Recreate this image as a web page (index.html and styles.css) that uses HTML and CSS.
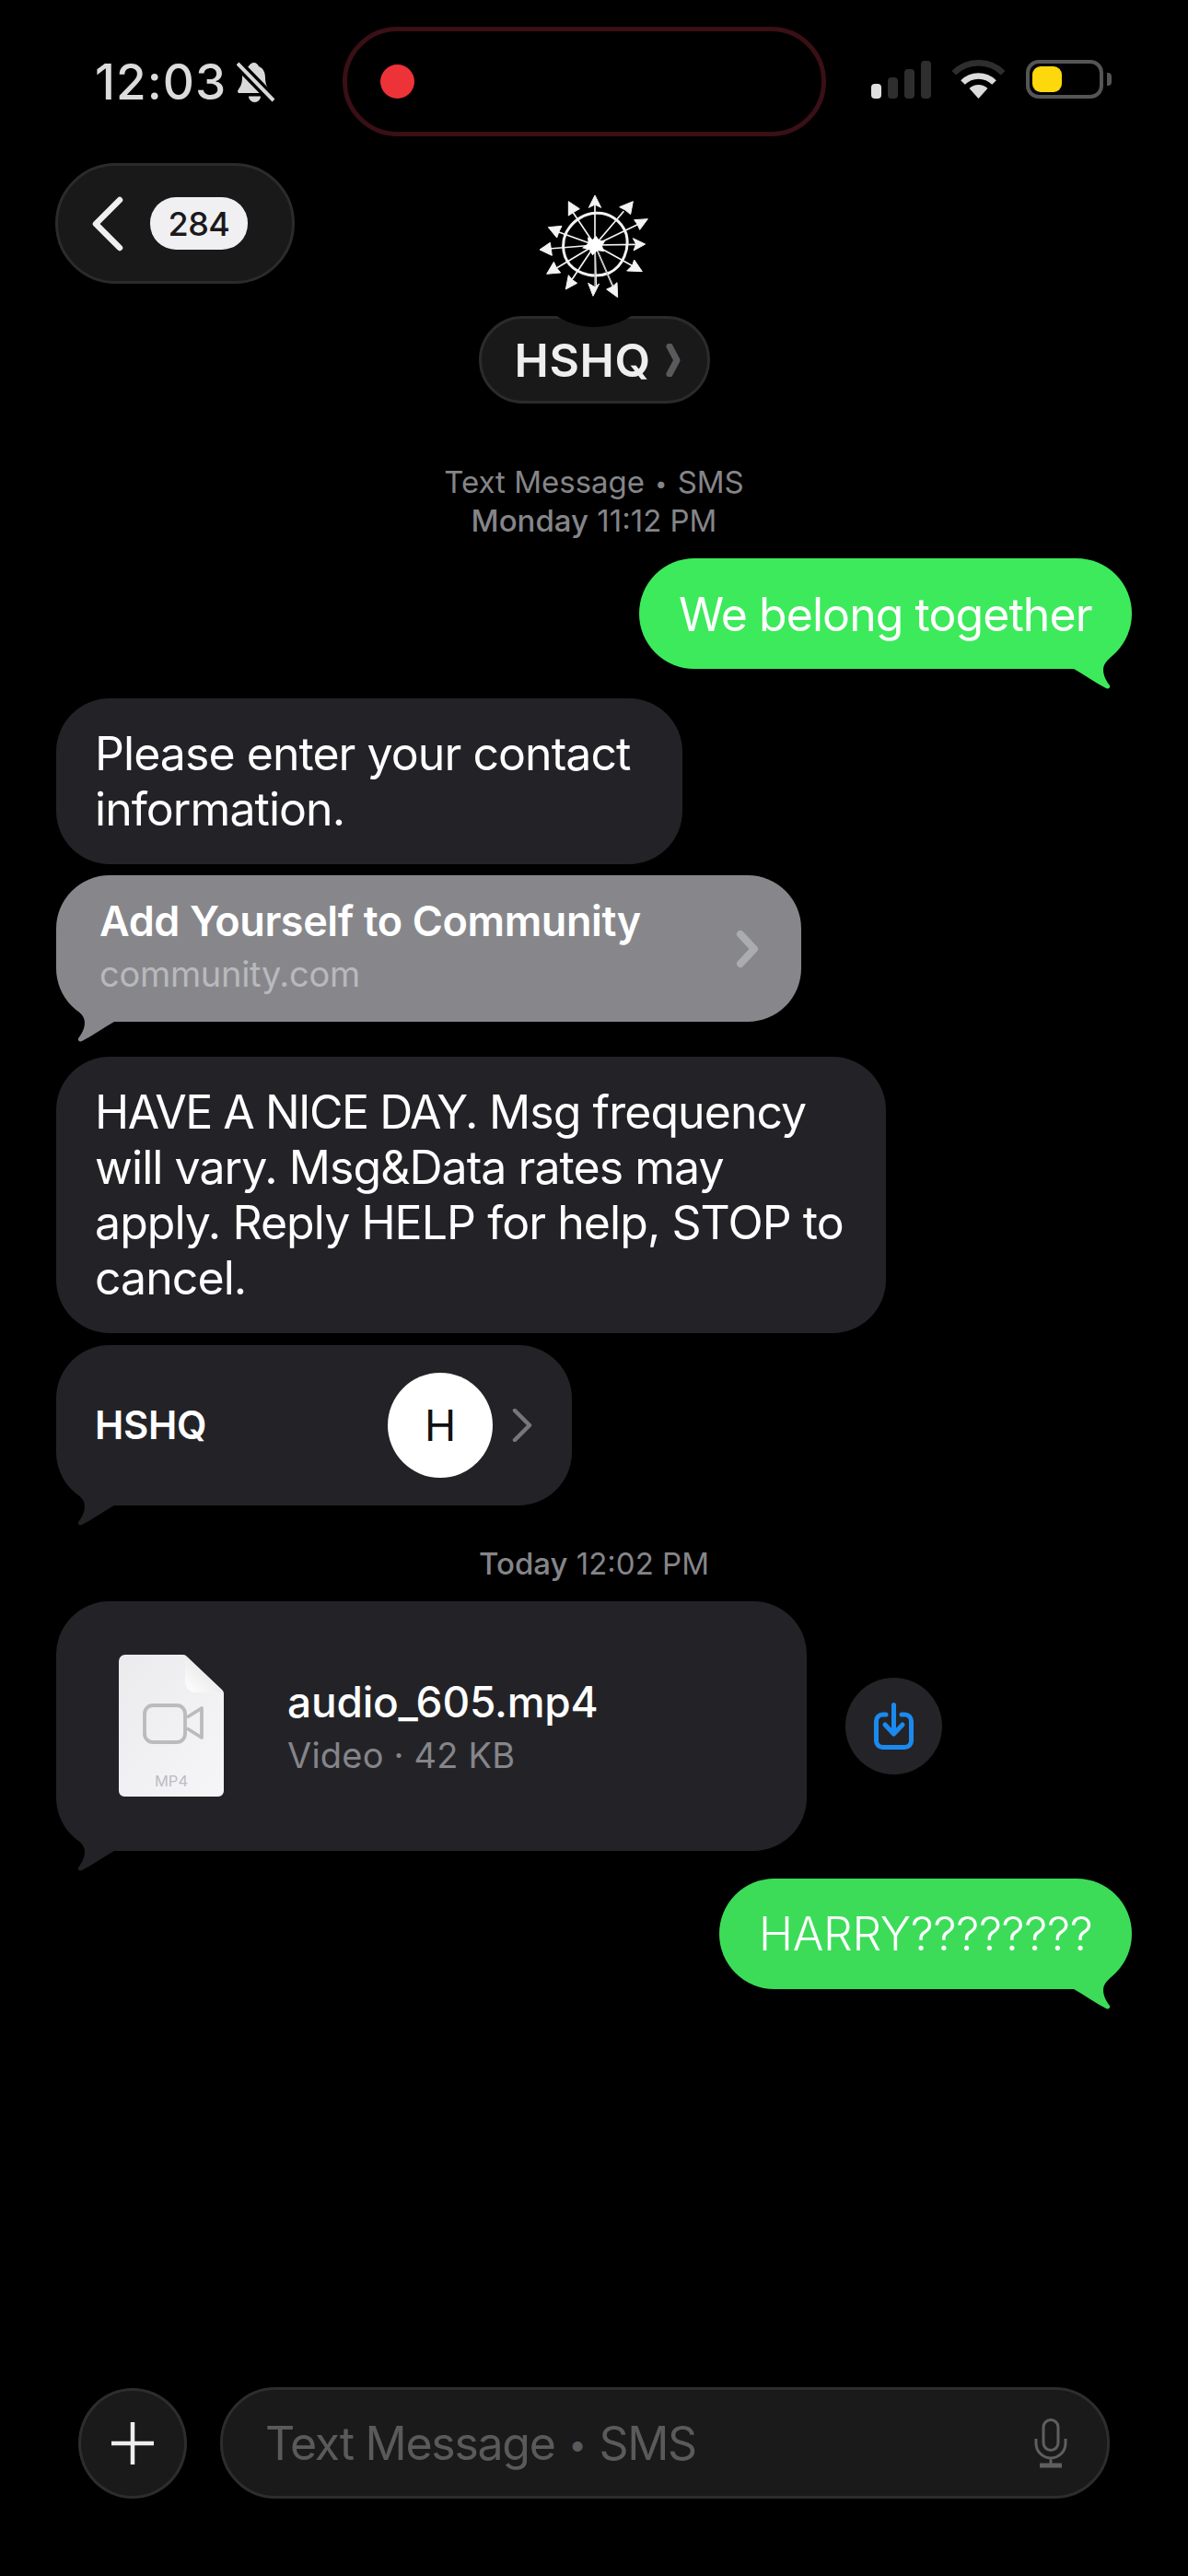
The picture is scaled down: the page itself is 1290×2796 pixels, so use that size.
FILE: index.html
```html
<!DOCTYPE html>
<html lang="en">
<head>
<meta charset="utf-8">
<title>HSHQ</title>
<link rel="stylesheet" href="styles.css">
</head>
<body>
<div class="phone">
  <header class="status">
    <span class="time">12:03</span>
    <svg class="bell" viewBox="0 0 43 46">
      <path d="M19 2c-3 0-5 2-6 4-5 2-7 7-7 12 0 7-2 10-4 13-1.500 2-1 4 1 4h31c2 0 2.500-2 1-4-2-3-4-6-4-13 0-5-2-10-7-12-1-2-3-4-5-4z" fill="#d9d9d9"/>
      <path d="M13 38.500h13c0 3.500-3 6.500-6.500 6.500S13 42 13 38.500z" fill="#d9d9d9"/>
      <path d="M0 2L41 44" stroke="#000" stroke-width="11" fill="none"/>
      <path d="M1 3L40 43" stroke="#d9d9d9" stroke-width="4" fill="none"/>
    </svg>
    <div class="island"><span class="rec"></span></div>
    <div class="signal">
      <span class="bar bar1"></span><span class="bar bar2"></span><span class="bar bar3"></span><span class="bar bar4"></span>
    </div>
    <svg class="wifi" viewBox="0 0 57 42">
      <path d="M28.500 42L18.600 31A14 14 0 0 1 38.400 31Z" fill="#dcdcdc"/>
      <path d="M11.500 24.500A24 24 0 0 1 45.500 24.500" stroke="#dcdcdc" stroke-width="6.500" fill="none"/>
      <path d="M1.800 14.200A38 38 0 0 1 55.200 14.200" stroke="#2e2e2e" stroke-width="6.500" fill="none"/>
    </svg>
    <div class="battery"><span class="battery-box"><span class="battery-fill"></span></span><span class="battery-cap"></span></div>
  </header>

  <nav class="nav">
    <div class="back">
      <svg class="back-chev" viewBox="0 0 36 60"><path d="M31 4L5 30l26 26" fill="none" stroke="#efefef" stroke-width="6.500" stroke-linecap="round" stroke-linejoin="round"/></svg>
      <span class="count">284</span>
    </div>
    <div class="contact-head">
      <div class="avatar">
        <svg class="logo" viewBox="0 0 510 450">
          <path d="M258 124C300 120 345 146 360 192C372 240 350 296 306 318C262 336 206 326 176 292C148 258 148 206 174 172C194 144 226 126 258 124Z" fill="none" stroke="#f4f4f4" stroke-width="9"/>
          <path d="M258 228L258 90M258 228L352 118M258 228L400 160M258 228L392 226M258 228L388 300M258 228L320 370M258 228L262 360M258 228L180 345M258 228L128 306M258 228L108 240M258 228L135 184M258 228L184 118" stroke="#f4f4f4" stroke-width="5" fill="none"/>
          <path d="M258 228L258 370M258 228L318 368" stroke="#bdbdbd" stroke-width="4" fill="none"/>
          <path d="M262 198L272 212L292 214L282 230L288 250L266 246L250 262L240 244L216 238L236 222L234 202L250 210Z" fill="#fff"/>
          <path d="M258 66L278 106L258 96L238 106ZM382 86L374 128L357 114L338 104ZM430 143L404 178L396 160L386 146ZM422 225L384 246L392 225L382 206ZM412 314L362 312L380 294L386 276ZM332 398L296 372L316 363L330 350ZM252 394L236 352L258 365L272 354ZM163 372L200 352L184 341L172 326ZM101 322L146 318L133 302L124 283ZM78 243L118 262L115 240L112 220ZM106 170L134 204L141 184L150 166ZM172 86L208 110L190 120L172 132Z" fill="#f4f4f4" stroke="#f4f4f4" stroke-width="3" stroke-linejoin="round"/>
        </svg>
      </div>
      <div class="name-pill"><span class="name">HSHQ</span><svg class="name-chev" viewBox="0 0 16 36"><path d="M4 3l8 15-8 15" fill="none" stroke="#5a5a5c" stroke-width="7" stroke-linecap="round" stroke-linejoin="round"/></svg></div>
    </div>
  </nav>

  <main class="thread">
    <p class="stamp stamp-first">Text Message <span class="dot">•</span> SMS<br><span class="stamp-day">Monday</span> 11:12 PM</p>

    <div class="bubble green sent-1">We belong together
      <svg class="tail tail-right" viewBox="0 0 70 60"><path d="M17 18C22 26 31 30 31 39C31 46 27 52 24 56C23 59 26 60 28 59C40 53 52 44 63 38L63 28Z"/></svg>
    </div>

    <div class="bubble dark b-contact">Please enter your contact<br>information.</div>

    <div class="bubble link">
      <div class="link-text">
        <div class="link-title">Add Yourself to Community</div>
        <div class="link-sub">community.com</div>
      </div>
      <svg class="link-chev" viewBox="0 0 28 42"><path d="M6 5l15 16L6 37" fill="none" stroke="#abacb0" stroke-width="8" stroke-linecap="round" stroke-linejoin="round"/></svg>
      <svg class="tail tail-left" viewBox="0 0 70 60"><path d="M17 18C22 26 31 30 31 39C31 46 27 52 24 56C23 59 26 60 28 59C40 53 52 44 63 38L63 28Z"/></svg>
    </div>

    <div class="bubble dark b-long"><span class="caps">HAVE A NICE DAY.</span> Msg frequency<br>will vary. Msg&amp;Data rates may<br>apply. Reply HELP for help, STOP to<br>cancel.</div>

    <div class="bubble dark card">
      <span class="card-name">HSHQ</span>
      <span class="card-avatar">H</span>
      <svg class="card-chev" viewBox="0 0 22 36"><path d="M3 2l16 16L3 34" fill="none" stroke="#77777b" stroke-width="4.500" stroke-linecap="round" stroke-linejoin="round"/></svg>
      <svg class="tail tail-left" viewBox="0 0 70 60"><path d="M17 18C22 26 31 30 31 39C31 46 27 52 24 56C23 59 26 60 28 59C40 53 52 44 63 38L63 28Z"/></svg>
    </div>

    <p class="stamp stamp-today"><span class="stamp-day">Today</span> 12:02 PM</p>

    <div class="file-row">
      <div class="bubble dark file">
        <svg class="file-icon" viewBox="0 0 114 154">
          <defs>
            <linearGradient id="page" x1="0" y1="0" x2="1" y2="1"><stop offset="0" stop-color="#ebebed"/><stop offset="1" stop-color="#f6f6f8"/></linearGradient>
            <linearGradient id="fold" x1="0" y1="1" x2="1" y2="0"><stop offset="0" stop-color="#ffffff"/><stop offset="1" stop-color="#dcdcde"/></linearGradient>
          </defs>
          <path d="M7 0H70a6 6 0 0 1 4 2L112 38a6 6 0 0 1 2 5V148a6 6 0 0 1-6 6H6a6 6 0 0 1-6-6V7a7 7 0 0 1 7-7z" fill="url(#page)"/>
          <path d="M72 1L113 41H84a12 12 0 0 1-12-12z" fill="url(#fold)"/>
          <rect x="28" y="55" width="44" height="40" rx="9" fill="none" stroke="#bbbbbe" stroke-width="3.800"/>
          <path d="M74 68L90 58V90L74 80" fill="none" stroke="#bbbbbe" stroke-width="3.800" stroke-linejoin="round"/>
          <text class="file-ext" x="57" y="143" text-anchor="middle">MP4</text>
        </svg>
        <div class="file-text">
          <div class="file-name">audio_605.mp4</div>
          <div class="file-sub">Video · 42 KB</div>
        </div>
        <svg class="tail tail-left" viewBox="0 0 70 60"><path d="M17 18C22 26 31 30 31 39C31 46 27 52 24 56C23 59 26 60 28 59C40 53 52 44 63 38L63 28Z"/></svg>
      </div>
      <div class="download">
        <svg class="download-icon" viewBox="0 0 43 51"><path d="M13 13H9.500a7 7 0 0 0-7 7V41.500a7 7 0 0 0 7 7H33.500a7 7 0 0 0 7-7V20a7 7 0 0 0-7-7H30M21.500 2.500V33M12 24l9.500 10L31 24" fill="none" stroke="#1b8af0" stroke-width="5" stroke-linecap="round" stroke-linejoin="round"/></svg>
      </div>
    </div>

    <div class="bubble green green-b sent-2">HARRY????????
      <svg class="tail tail-right" viewBox="0 0 70 60"><path d="M17 18C22 26 31 30 31 39C31 46 27 52 24 56C23 59 26 60 28 59C40 53 52 44 63 38L63 28Z"/></svg>
    </div>
  </main>

  <footer class="composer">
    <div class="plus"><svg class="plus-icon" viewBox="0 0 46 46"><path d="M23 0V46M0 23H46" stroke="#eeeeee" stroke-width="4.500" fill="none"/></svg></div>
    <div class="field">
      <span class="placeholder">Text Message <span class="dot">•</span> SMS</span>
      <svg class="mic" viewBox="0 0 36 54"><rect x="10" y="1.500" width="16" height="33" rx="8" fill="none" stroke="#5f5f60" stroke-width="3"/><path d="M2 22v5a16 16 0 0 0 32 0v-5M18 43v8" fill="none" stroke="#5f5f60" stroke-width="3"/><path d="M6 51H30" stroke="#5f5f60" stroke-width="5"/></svg>
    </div>
  </footer>
</div>
</body>
</html>
```
FILE: styles.css
```css
* { box-sizing: border-box; }
html, body { margin: 0; padding: 0; background: #000; }
.phone {
  width: 1290px;
  height: 2796px;
  background: #000;
  display: flex;
  flex-direction: column;
  overflow: hidden;
  font-family: "Inter", "Liberation Sans", sans-serif;
  color: #fff;
}
svg { display: block; }
.dot { font-size: 0.7em; line-height: 0; vertical-align: 0.1em; margin: 0 2px; }

/* status bar */
.status {
  display: flex;
  align-items: center;
  height: 119px;
  margin-top: 29px;
  padding-left: 103px;
}
.time { width: 140px; font-size: 53px; font-weight: 500; letter-spacing: 1px; color: #dcdcdc; white-space: nowrap; }
.bell { width: 43px; height: 46px; margin-left: 14px; }
.island {
  width: 525px;
  height: 119px;
  margin-left: 72px;
  border: 5px solid #3a0f15;
  border-radius: 60px;
  display: flex;
  align-items: center;
  padding-left: 36px;
}
.rec { width: 37px; height: 37px; border-radius: 50%; background: #ee3338; }
.signal { display: flex; align-items: flex-end; gap: 7px; height: 41px; margin-left: 49px; margin-top: -5px; }
.bar { width: 11px; border-radius: 4px; background: #2e2e2e; }
.bar1 { height: 16px; background: #e0e0e0; }
.bar2 { height: 23px; }
.bar3 { height: 32px; }
.bar4 { height: 41px; }
.wifi { width: 57px; height: 42px; margin-left: 23px; margin-top: -5px; }
.battery { display: flex; align-items: center; gap: 4px; margin-left: 23px; margin-top: -5px; }
.battery-box { width: 84px; height: 42px; border: 4px solid #555; border-radius: 14px; padding: 3px; display: block; }
.battery-fill { display: block; width: 32px; height: 100%; background: #fcd80c; border-radius: 9px; }
.battery-cap { width: 5px; height: 14px; background: #555; border-radius: 0 4px 4px 0; }

/* nav */
.nav {
  display: grid;
  grid-template-columns: 1fr 251px 1fr;
  padding: 0 60px;
  margin-top: 29px;
  align-items: start;
}
.back {
  width: 260px;
  height: 131px;
  background: #19191a;
  border: 3px solid #2b2b2c;
  border-radius: 66px;
  display: flex;
  align-items: center;
  padding-left: 36px;
}
.back-chev { width: 36px; height: 60px; }
.count {
  margin-left: 28px;
  width: 106px;
  height: 57px;
  border-radius: 28px;
  background: #f0f0f2;
  color: #1a1a1c;
  font-size: 36px;
  font-weight: 500;
  letter-spacing: -0.5px;
  display: flex;
  align-items: center;
  justify-content: center;
}
.contact-head { margin-top: 28px; display: flex; flex-direction: column; align-items: center; }
.avatar {
  position: relative;
  z-index: 1;
  width: 150px;
  height: 150px;
  border-radius: 50%;
  background: #000;
}
.logo { position: absolute; left: -10px; top: -15px; width: 170px; height: 150px; }
.name-pill {
  width: 251px;
  height: 95px;
  margin-top: -12px;
  background: #19191a;
  border: 3px solid #2b2b2c;
  border-radius: 48px;
  display: flex;
  align-items: center;
  padding-left: 36px;
}
.name { font-size: 50px; font-weight: 600; color: #eee; letter-spacing: 0.6px; }
.name-chev { width: 16px; height: 36px; margin-left: 16px; }

/* thread */
.thread { display: flex; flex-direction: column; padding: 0 61px; }
.stamp {
  margin: 0;
  text-align: center;
  font-size: 33px;
  line-height: 42px;
  color: #858589;
}
.stamp-day { font-weight: 500; }
.stamp-first { margin-top: 64px; }
.stamp-today { margin-top: 42px; }

.bubble {
  position: relative;
  font-size: 50px;
  line-height: 60px;
  letter-spacing: -0.95px;
  border-radius: 58px;
  white-space: nowrap;
}
.caps { letter-spacing: -1.5px; }
.dark { background: #232327; color: #fff; }
.green { background: #3dea5b; align-self: flex-end; height: 120px; border-radius: 60px; display: flex; align-items: center; }
.green-b { background: #3cdc59; }
.green .tail { color: #3dea5b; }
.green-b .tail { color: #3cdc59; }
.sent-1 { width: 535px; margin-top: 20px; padding: 2px 0 0 43px; }
.sent-2 { width: 448px; margin-top: 30px; padding-left: 43px; font-weight: 300; letter-spacing: -0.3px; }

.tail { position: absolute; width: 70px; height: 60px; bottom: -22px; fill: currentColor; }
.tail-left { left: 0; }
.tail-right { right: 0; transform: scaleX(-1); }

.b-contact { width: 680px; margin-top: 32px; padding: 30px 42px; }
.link {
  width: 809px;
  height: 159px;
  margin-top: 12px;
  background: #87878b;
  display: flex;
  align-items: center;
  padding-left: 47px;
}
.link .tail { color: #87878b; }
.link-text { flex: 1; }
.link-title { font-size: 45px; line-height: 54px; margin-top: -4px; font-weight: 600; letter-spacing: -0.4px; }
.link-sub { font-size: 38px; line-height: 50px; margin-top: 5px; color: #b9b9bd; letter-spacing: -0.3px; }
.link-chev { width: 28px; height: 42px; margin-right: 44px; }

.b-long { width: 901px; margin-top: 38px; padding: 30px 42px; }

.card {
  width: 560px;
  height: 174px;
  margin-top: 13px;
  display: flex;
  align-items: center;
  padding-left: 42px;
}
.card .tail { color: #232327; }
.card-name { flex: 1; font-size: 42px; font-weight: 600; letter-spacing: -0.3px; }
.card-avatar {
  width: 114px;
  height: 114px;
  border-radius: 50%;
  background: #fff;
  color: #111;
  font-size: 46px;
  font-weight: 400;
  letter-spacing: 0;
  display: flex;
  align-items: center;
  justify-content: center;
}
.card-chev { width: 22px; height: 36px; margin-left: 21px; margin-right: 43px; }

.file-row { display: flex; align-items: center; gap: 42px; margin-top: 20px; }
.file {
  width: 815px;
  height: 271px;
  display: flex;
  align-items: center;
  padding-left: 68px;
}
.file .tail { color: #232327; }
.file-icon { width: 114px; height: 154px; margin-top: -1px; }
.file-ext { font-size: 16.5px; fill: #bdbdc0; letter-spacing: 0; }
.file-text { margin-left: 69px; }
.file-name { font-size: 46px; line-height: 60px; font-weight: 500; letter-spacing: -0.2px; }
.file-sub { font-size: 38px; line-height: 50px; margin-top: 3px; color: #85858a; letter-spacing: 0.2px; }
.download {
  width: 105px;
  height: 105px;
  border-radius: 50%;
  background: #242428;
  display: flex;
  align-items: center;
  justify-content: center;
}
.download-icon { width: 43px; height: 51px; }

/* composer */
.composer {
  margin-top: auto;
  margin-bottom: 84px;
  padding: 0 85px;
  display: flex;
  align-items: center;
  gap: 36px;
}
.plus {
  width: 118px;
  height: 120px;
  border-radius: 50%;
  background: #1a1a1b;
  border: 3px solid #2d2d2e;
  display: flex;
  align-items: center;
  justify-content: center;
}
.plus-icon { width: 46px; height: 46px; }
.field {
  width: 966px;
  height: 121px;
  flex: none;
  background: #1a1a1b;
  border: 3px solid #2d2d2e;
  border-radius: 60px;
  display: flex;
  align-items: center;
  justify-content: space-between;
  padding: 0 43px 0 46px;
}
.placeholder { font-size: 50px; letter-spacing: -1.3px; color: #5a5a5b; }
.mic { width: 36px; height: 54px; }
```
